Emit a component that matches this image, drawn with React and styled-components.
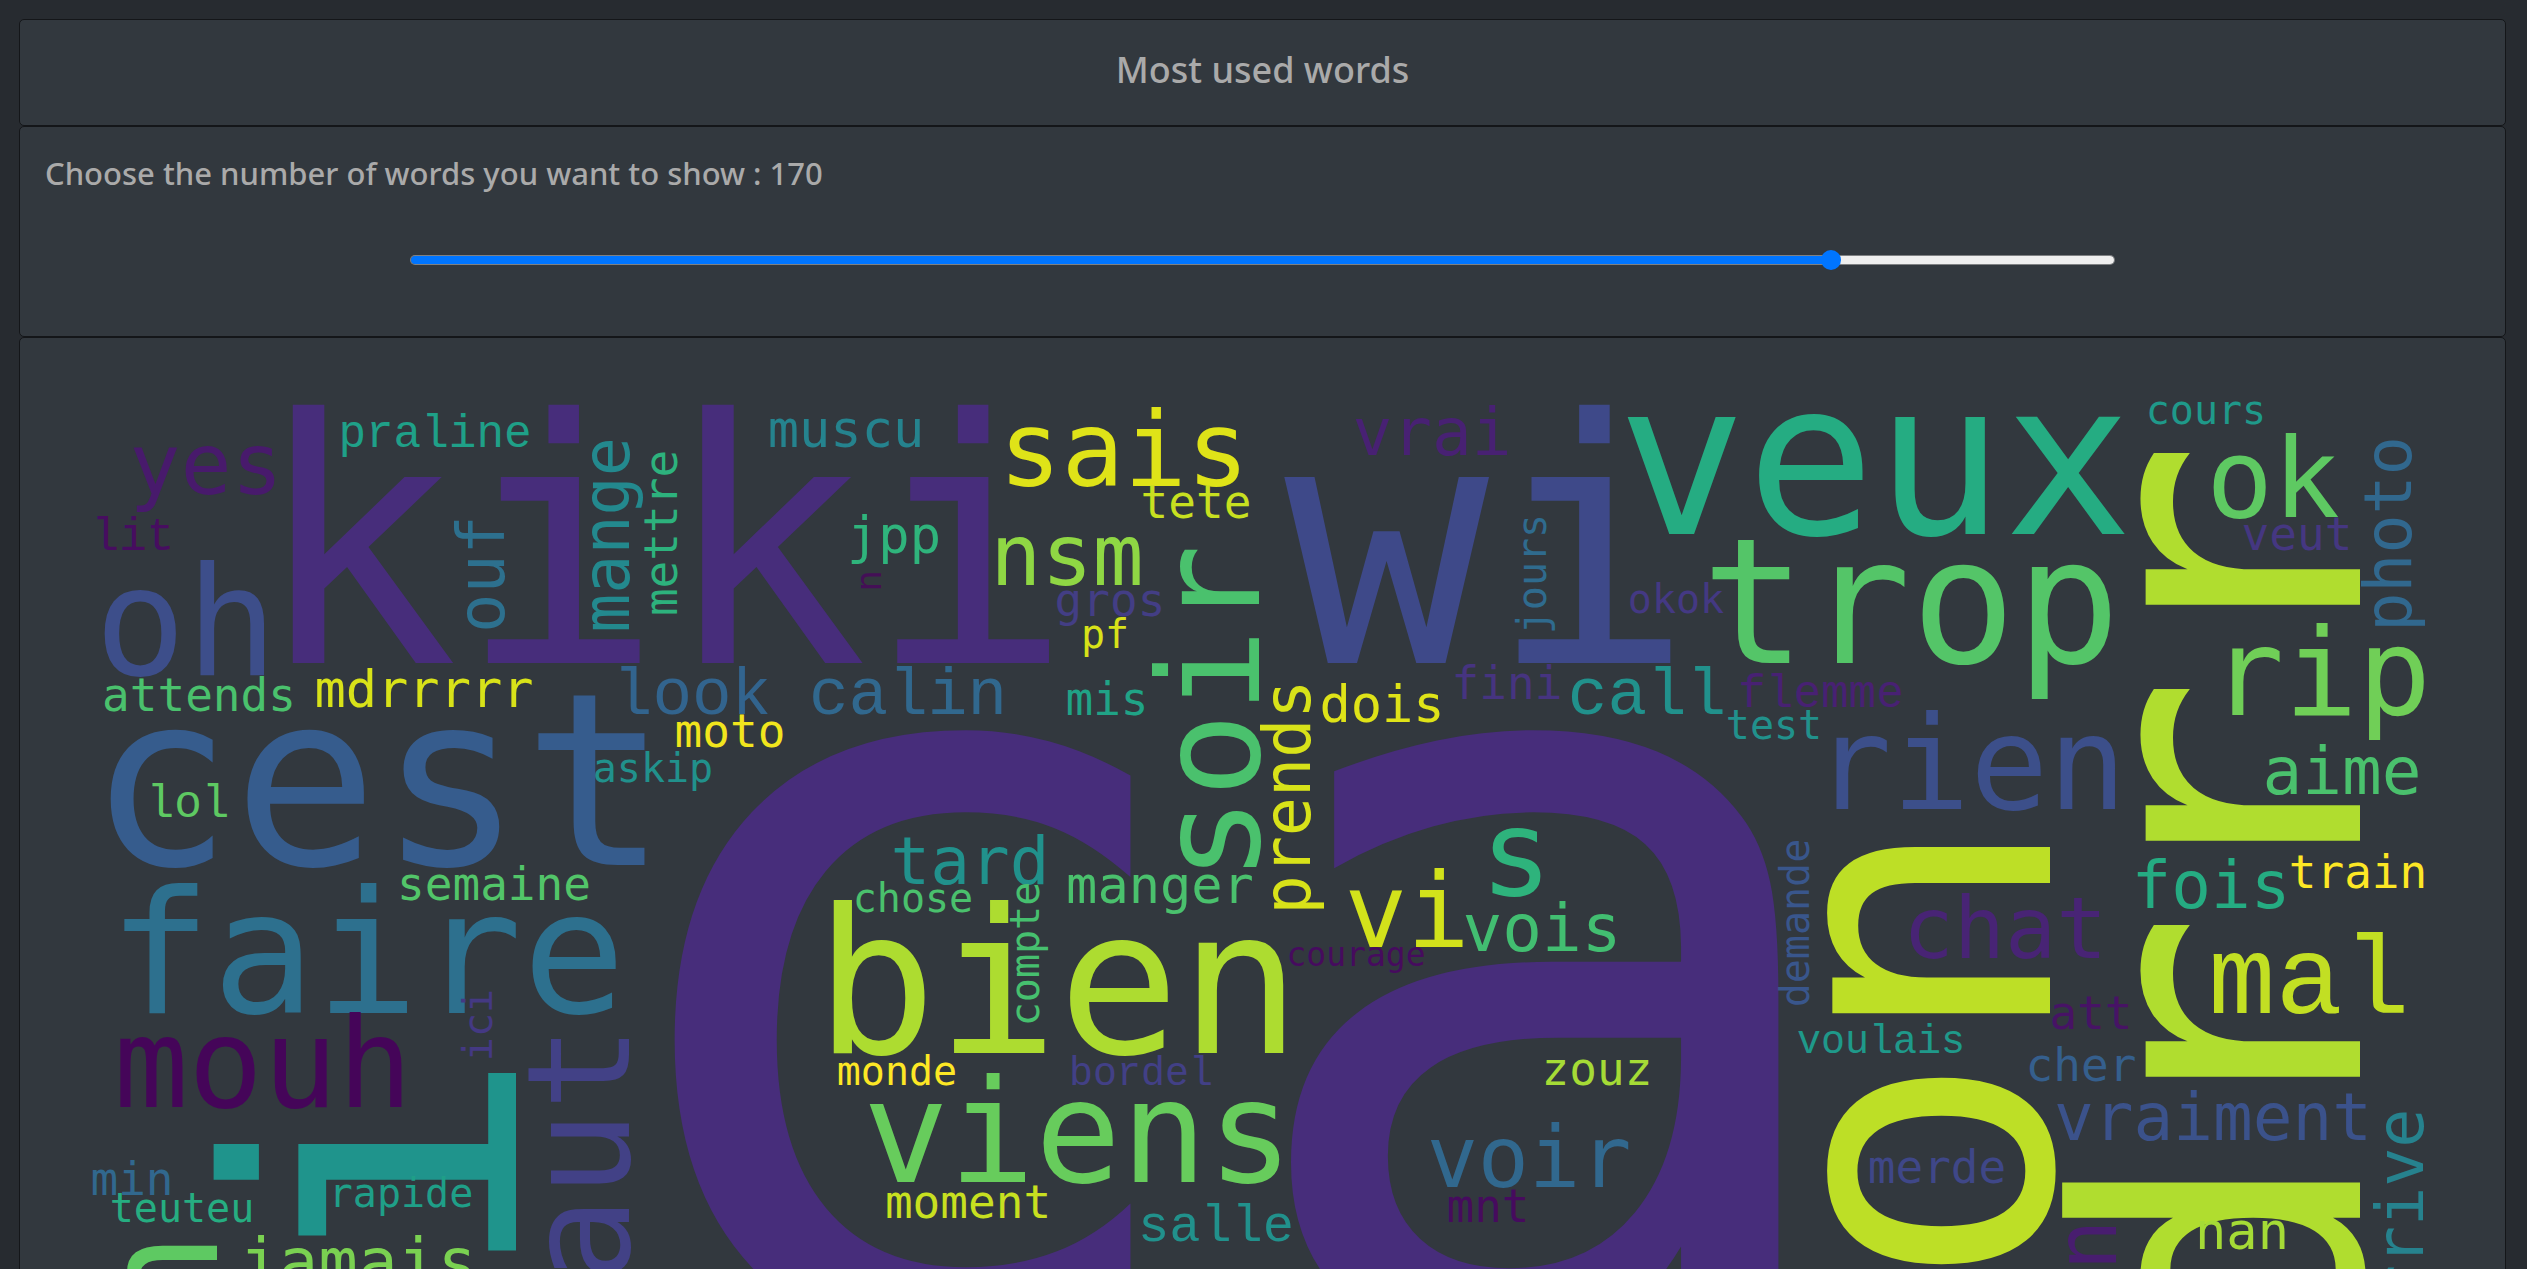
import React, { useState } from "react";
import styled, { createGlobalStyle } from "styled-components";

const GlobalStyle = createGlobalStyle`
  *, *::before, *::after {
    box-sizing: border-box;
  }

  body {
    margin: 0;
    background: #272b30;
    color: #aaa;
    font-family: "Noto Sans", "Open Sans", sans-serif;
    font-size: 31px;
    font-weight: 500;
  }
`;

const Page = styled.main`
  height: 100vh;
  padding: 19px 21px 0 19px;
  overflow-y: auto;
  scrollbar-width: none;
`;

const Card = styled.section`
  padding: 25px;
  background: #32383e;
  border: 1px solid #141619;
  border-radius: 5px;
`;

const Title = styled.h4`
  margin: 0 0 6px;
  font-size: 36px;
  font-weight: 500;
  line-height: 49px;
  text-align: center;
`;

const CountLabel = styled.label`
  display: block;
  line-height: 43px;
`;

const SliderRow = styled.div`
  display: flex;
  justify-content: center;
  padding: 55px 0 41px;
`;

const Slider = styled.input`
  appearance: none;
  width: 70%;
  height: 20px;
  margin: 0;
  background: transparent;
  cursor: pointer;

  &::-webkit-slider-runnable-track {
    height: 10px;
    border: 1px solid rgba(178, 178, 178, 0.6);
    border-radius: 5px;
    background: linear-gradient(
      to right,
      #0075ff var(--filled),
      #efefef var(--filled)
    );
    background-clip: padding-box;
  }

  &::-webkit-slider-thumb {
    appearance: none;
    width: 20px;
    height: 20px;
    margin-top: -6px;
    border-radius: 50%;
    background: #0075ff;
  }
`;

const Cloud = styled.svg`
  display: block;
  width: 100%;
  height: auto;
`;

const Word = styled.text`
  font-family: ${(p) =>
    p.$slab
      ? '"Liberation Mono", monospace'
      : '"DejaVu Sans Mono", monospace'};
  font-size: ${(p) => p.$size}px;
  font-weight: 400;
  fill: ${(p) => p.$color};
  text-anchor: middle;
`;

const MIN_WORDS = 10;
const MAX_WORDS = 201;

/* text, centre, baseline, size, colour */
const ACROSS = [
  ["ca", 1221, 1334, 1078, "#472d7b"],
  ["kiki", 663, 663, 340, "#472d7b"],
  ["wi", 1489, 663, 340, "#3e4989"],
  ["cest", 378, 865, 241, "#365c8d"],
  ["veux", 1875, 534, 214, "#25ac82"],
  ["bien", 1058, 1053, 202, "#addc30"],
  ["trop", 1911, 663, 174, "#54c568"],
  ["faire", 367, 1013, 172, "#2d708e"],
  ["oh", 186, 675, 152, "#3d4e8a"],
  ["viens", 1078, 1182, 143, "#67cc5c"],
  ["rien", 1970, 809, 130, "#3c4f8a"],
  ["mouh", 263, 1107, 124, "#450559"],
  ["rip", 2321, 715, 122, "#70cf57"],
  ["s", 1516, 895, 120, "#2eb37c"],
  ["mal", 2309, 1013, 112, "#c2df23"],
  ["ok", 2273, 517, 111, "#5ec962"],
  ["sais", 1124, 486, 104, "#dfe318"],
  ["vi", 1407, 947, 104, "#d2e21b"],
  ["nsm", 1067, 585, 85, "#8fd744"],
  ["voir", 1529, 1187, 85, "#31688e"],
  ["yes", 206, 494, 85, "#481a6c"],
  ["chat", 2005, 958, 85, "#482475"],
  ["look", 692, 714, 66, "#32648e"],
  ["calin", 908, 714, 66, "#31688e"],
  ["vrai", 1432, 455, 66, "#482173"],
  ["call", 1647, 714, 66, "#21918c"],
  ["aime", 2342, 794, 66, "#4ac16d"],
  ["jamais", 358, 1285, 66, "#7ad151"],
  ["tard", 970, 884, 66, "#21918c"],
  ["vois", 1542, 951, 66, "#42be71"],
  ["vraiment", 2213, 1140, 66, "#3b528b"],
  ["fois", 2211, 908, 66, "#25ac82"],
  ["mdrrrrr", 424, 707, 52, "#d8e219"],
  ["muscu", 846, 447, 52, "#25838e"],
  ["jpp", 894, 553, 52, "#2fb47c"],
  ["dois", 1382, 722, 52, "#dfe318"],
  ["manger", 1160, 903, 52, "#4ac16d"],
  ["salle", 1216, 1241, 52, "#21918c"],
  ["nan", 2242, 1249, 52, "#a5db36"],
  ["lit", 133, 550, 46, "#470d60"],
  ["praline", 435, 447, 46, "#1fa088"],
  ["attends", 199, 711, 46, "#4ac16d"],
  ["lol", 188, 817, 46, "#5ec962"],
  ["moto", 730, 747, 46, "#f1e51d"],
  ["tete", 1196, 518, 46, "#c8e020"],
  ["gros", 1110, 616, 46, "#433e85"],
  ["mis", 1107, 715, 46, "#20a386"],
  ["fini", 1507, 699, 46, "#463480"],
  ["flemme", 1821, 707, 46, "#482173"],
  ["veut", 2297, 550, 46, "#453781"],
  ["semaine", 494, 900, 46, "#52c569"],
  ["min", 132, 1195, 46, "#31688e"],
  ["moment", 968, 1218, 46, "#c8e020"],
  ["zouz", 1597, 1085, 46, "#a5db36"],
  ["mnt", 1488, 1222, 46, "#460b5e"],
  ["att", 2091, 1029, 46, "#471365"],
  ["cher", 2081, 1081, 46, "#355f8d"],
  ["merde", 1937, 1183, 46, "#3f4788"],
  ["train", 2358, 888, 46, "#fde725"],
  ["askip", 653, 782, 40, "#21918c"],
  ["pf", 1105, 648, 40, "#d8e219"],
  ["okok", 1676, 613, 40, "#443983"],
  ["test", 1774, 739, 40, "#21918c"],
  ["cours", 2206, 424, 40, "#1f998a"],
  ["teuteu", 182, 1222, 40, "#26ad81"],
  ["rapide", 401, 1207, 40, "#1f9f88"],
  ["chose", 913, 912, 40, "#4ac16d"],
  ["monde", 897, 1085, 40, "#fde725"],
  ["bordel", 1141, 1085, 40, "#424086"],
  ["voulais", 1881, 1053, 40, "#1f998a"],
  ["courage", 1356, 966, 33, "#460b5e"],
];

/* text, baseline, centre, size, colour */
const UPWARD = [
  ["oui", 516, 1405, 398, "#1f948c"],
  ["non", 2050, 1171, 398, "#bddf26"],
  ["mdrrr", 2360, 1028, 392, "#b0dd2f"],
  ["non", 217, 1376, 160, "#5ec962"],
  ["faut", 629, 1197, 143, "#424186"],
  ["soir", 1259, 713, 140, "#4ac16d"],
  ["bon", 2116, 1296, 85, "#481d6f"],
  ["ouf", 504, 574, 65, "#2d708e"],
  ["mange", 629, 535, 65, "#23898e"],
  ["prends", 1310, 797, 65, "#d8e219"],
  ["photo", 2411, 534, 65, "#31688e"],
  ["arrive", 2423, 1226, 65, "#26828e"],
  ["mettre", 677, 533, 46, "#2db27d"],
  ["jours", 1546, 574, 40, "#2f6b8e"],
  ["ici", 492, 1025, 40, "#443983"],
  ["compte", 1039, 954, 40, "#46c06f"],
  ["demande", 1809, 923, 40, "#39568c"],
  ["n", 881, 581, 36, "#440f56"],
];

/* The largest words go first, so that smaller ones stay readable on top. */
const WORDS = [
  ...ACROSS.map(([text, x, y, size, color]) => ({ text, x, y, size, color })),
  ...UPWARD.map(([text, x, y, size, color]) => ({
    text,
    x,
    y,
    size,
    color,
    upward: true,
  })),
].sort((a, b) => b.size - a.size);

export default function App() {
  const [count, setCount] = useState(170);
  const filled = ((count - MIN_WORDS) / (MAX_WORDS - MIN_WORDS)) * 100;

  return (
    <>
      <GlobalStyle />
      <Page>
        <Card>
          <Title>Most used words</Title>
        </Card>
        <Card>
          <CountLabel htmlFor="word-count">
            Choose the number of words you want to show : {count}
          </CountLabel>
          <SliderRow>
            <Slider
              id="word-count"
              type="range"
              min={MIN_WORDS}
              max={MAX_WORDS}
              value={count}
              onChange={(e) => setCount(Number(e.target.value))}
              style={{ "--filled": `${filled}%` }}
            />
          </SliderRow>
        </Card>
        <Card>
          <Cloud viewBox="45 363 2435 1217" role="img" aria-label="Word cloud">
            {WORDS.map(({ text, x, y, size, color, upward }) => (
              <Word
                key={`${text}-${x}`}
                x={x}
                y={y}
                transform={upward ? `rotate(-90 ${x} ${y})` : undefined}
                $size={size}
                $color={color}
                $slab={text.includes("l")}
              >
                {text}
              </Word>
            ))}
          </Cloud>
        </Card>
      </Page>
    </>
  );
}
